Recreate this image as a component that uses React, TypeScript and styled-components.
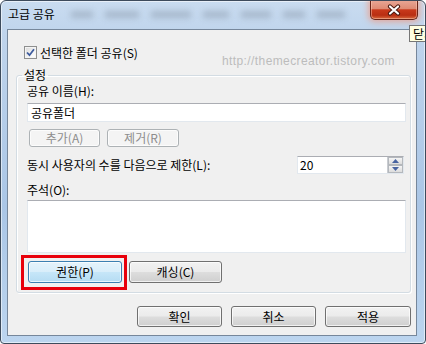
import styled, { createGlobalStyle } from 'styled-components';

const GlobalStyle = createGlobalStyle`
  html, body {
    margin: 0;
    padding: 0;
    background: #ffffff;
  }
  body {
    font-family: 'Noto Sans CJK KR', 'Noto Sans', sans-serif;
    font-size: 12px;
    color: #000;
  }
  * {
    box-sizing: border-box;
  }
`;

const blurWidths = [22, 34, 40, 26, 30, 22, 28];

const App = () => {
    return (
        <>
            <GlobalStyle />
            <Window>
                <TitleBar>
                    <Title>고급 공유</Title>
                    <BlurRow>
                        {blurWidths.map((w, i) => (
                            <BlurBlock key={i} $w={w} />
                        ))}
                    </BlurRow>
                    <CloseButton>
                        <svg width="16" height="12" viewBox="0 0 16 12">
                            <path d="M4 2.5 L12 9.5 M12 2.5 L4 9.5" stroke="#4a1a10" strokeWidth="4.2" strokeLinecap="round" />
                            <path d="M4 2.5 L12 9.5 M12 2.5 L4 9.5" stroke="#ffffff" strokeWidth="2.2" strokeLinecap="round" />
                        </svg>
                    </CloseButton>
                </TitleBar>

                <Client>
                    <Watermark>http://themecreator.tistory.com</Watermark>

                    <CheckRow>
                        <CheckBox>
                            <svg width="9" height="9" viewBox="0 0 9 9">
                                <path d="M1 4.5 L3.5 7.2 L8 1.2" stroke="#3e5c9e" strokeWidth="1.8" fill="none" />
                            </svg>
                        </CheckBox>
                        <span>선택한 폴더 공유(S)</span>
                    </CheckRow>

                    <Group>
                        <Legend>설정</Legend>
                        <Label>공유 이름(H):</Label>
                        <TextInput>공유폴더</TextInput>

                        <ButtonRow $indent={2}>
                            <Button $w={71} $h={18} $variant="disabled">추가(A)</Button>
                            <Button $w={72} $h={18} $variant="disabled">제거(R)</Button>
                        </ButtonRow>

                        <LimitRow>
                            <span>동시 사용자의 수를 다음으로 제한(L):</span>
                            <Spinner>
                                <SpinValue>20</SpinValue>
                                <SpinButtons>
                                    <SpinButton>
                                        <svg width="7" height="4" viewBox="0 0 7 4">
                                            <path d="M0 4 L3.5 0 L7 4 Z" fill="#4863a0" />
                                        </svg>
                                    </SpinButton>
                                    <SpinButton>
                                        <svg width="7" height="4" viewBox="0 0 7 4">
                                            <path d="M0 0 L3.5 4 L7 0 Z" fill="#4863a0" />
                                        </svg>
                                    </SpinButton>
                                </SpinButtons>
                            </Spinner>
                        </LimitRow>

                        <CommentLabel>주석(O):</CommentLabel>
                        <TextArea />

                        <ButtonRow $indent={1} $gap={7} $top={8}>
                            <Button $w={94} $h={22} $variant="focus" $marked>
                                권한(P)
                            </Button>
                            <Button $w={93} $h={22}>캐싱(C)</Button>
                        </ButtonRow>
                    </Group>

                    <Footer>
                        <Button $w={85} $h={21}>확인</Button>
                        <Button $w={85} $h={21}>취소</Button>
                        <Button $w={86} $h={21}>적용</Button>
                    </Footer>
                </Client>

                <Tooltip>닫기</Tooltip>
            </Window>
        </>
    );
};

export default App;

const Window = styled.div`
    position: relative;
    width: 426px;
    height: 344px;
    overflow: hidden;
    display: flex;
    flex-direction: column;
    padding: 0 8px 7px 6px;
    border: 1px solid #3d4b5c;
    border-radius: 6px 6px 4px 4px;
    background: linear-gradient(180deg, #c9dcf0 0%, #bfd4ec 10%, #aac6e6 60%, #bcd5ef 100%);
    box-shadow: inset 0 0 0 1px rgba(255, 255, 255, 0.55);
`;

const TitleBar = styled.div`
    height: 28px;
    display: flex;
    align-items: flex-start;
`;

const Title = styled.div`
    margin: 6px 0 0 1px;
    line-height: 14px;
    font-size: 12px;
    white-space: nowrap;
`;

const BlurRow = styled.div`
    display: flex;
    gap: 12px;
    margin: 10px 0 0 16px;
`;

const BlurBlock = styled.span<{ $w: number }>`
    display: block;
    width: ${(p) => p.$w}px;
    height: 7px;
    background: #8e9db0;
    opacity: 0.55;
    filter: blur(3px);
`;

const CloseButton = styled.div`
    margin: -1px -1px 0 auto;
    width: 48px;
    height: 20px;
    display: flex;
    align-items: center;
    justify-content: center;
    border: 1px solid #6a2418;
    border-top: none;
    border-radius: 0 0 5px 5px;
    background: linear-gradient(180deg, #e9a897 0%, #df8b74 45%, #c8391b 52%, #b92e12 80%, #d86a3e 100%);
    box-shadow: 0 0 6px 2px rgba(255, 130, 90, 0.55), inset 0 0 0 1px rgba(255, 210, 190, 0.45);
`;

const Client = styled.div`
    position: relative;
    flex: 1;
    display: flex;
    flex-direction: column;
    padding: 16px 5px 0 8px;
    border: 1px solid #76879b;
    background: #f0f0f0;
`;

const Watermark = styled.div`
    position: absolute;
    top: 24px;
    left: 214px;
    line-height: 14px;
    font-family: 'Liberation Sans', Arial, sans-serif;
    font-size: 12px;
    letter-spacing: 0.4px;
    color: #bcbcbc;
    white-space: nowrap;
`;

const CheckRow = styled.div`
    display: flex;
    align-items: center;
    gap: 3px;
    height: 13px;
    margin-left: 8px;
    line-height: 13px;
`;

const CheckBox = styled.div`
    width: 13px;
    height: 13px;
    display: flex;
    align-items: center;
    justify-content: center;
    border: 1px solid #8e8f8f;
    background: linear-gradient(135deg, #d8d8d8 0%, #f4f4f4 60%, #ffffff 100%);
    box-shadow: inset 0 0 0 1px #f4f4f4;
`;

const Group = styled.fieldset`
    margin: 10px 0 0 0;
    padding: 3px 4px 9px 10px;
    border: 1px solid #d3dce3;
    border-radius: 3px;
    box-shadow: inset 1px 1px 0 #ffffff, 1px 1px 0 #ffffff;
    display: flex;
    flex-direction: column;
    min-width: 0;
`;

const Legend = styled.legend`
    margin-left: -5px;
    padding: 0 2px;
    line-height: 12px;
    font-size: 12px;
`;

const Label = styled.div`
    line-height: 14px;
`;

const CommentLabel = styled(Label)`
    margin-top: 9px;
`;

const TextInput = styled.div`
    margin-top: 5px;
    height: 19px;
    padding: 0 3px;
    line-height: 17px;
    border: 1px solid #e2e8ee;
    border-top-color: #abadb3;
    background: #ffffff;
`;

const TextArea = styled.div`
    margin-top: 3px;
    height: 53px;
    border: 1px solid #e2e8ee;
    border-top-color: #abadb3;
    background: #ffffff;
`;

const ButtonRow = styled.div<{ $indent: number; $gap?: number; $top?: number }>`
    display: flex;
    gap: ${(p) => p.$gap ?? 7}px;
    margin-top: ${(p) => p.$top ?? 7}px;
    padding-left: ${(p) => p.$indent}px;
`;

type Variant = 'normal' | 'focus' | 'disabled';

const buttonLook: Record<Variant, string> = {
    normal: `
        border-color: #707070;
        color: #000;
        background: linear-gradient(180deg, #f2f2f2 0%, #ebebeb 48%, #dddddd 52%, #cfcfcf 100%);
    `,
    focus: `
        border-color: #3c7fb1;
        color: #000;
        background: linear-gradient(180deg, #e5f3fb 0%, #d9eefa 48%, #c6e6f8 52%, #b5dcf3 100%);
    `,
    disabled: `
        border-color: #adb2b5;
        color: #8d8d8d;
        background: #f4f4f4;
    `,
};

// the red annotation frame drawn over the marked button
const markFrame = `
    &::after {
        content: '';
        position: absolute;
        top: -7px;
        left: -8px;
        right: -6px;
        bottom: -8px;
        border: 3px solid #e8000b;
        pointer-events: none;
    }
`;

const Button = styled.div<{ $w: number; $h: number; $variant?: Variant; $marked?: boolean }>`
    position: relative;
    width: ${(p) => p.$w}px;
    height: ${(p) => p.$h}px;
    display: flex;
    align-items: center;
    justify-content: center;
    border: 1px solid;
    border-radius: 3px;
    box-shadow: inset 0 0 0 1px rgba(255, 255, 255, 0.7);
    font-size: 12px;
    line-height: 14px;
    ${(p) => buttonLook[p.$variant ?? 'normal']}
    ${(p) => (p.$marked ? markFrame : '')}
`;

const LimitRow = styled.div`
    display: flex;
    align-items: center;
    justify-content: space-between;
    margin-top: 9px;
    padding-right: 2px;
    line-height: 14px;
`;

const Spinner = styled.div`
    width: 107px;
    height: 18px;
    display: flex;
    border: 1px solid #e2e8ee;
    border-top-color: #abadb3;
    background: #ffffff;
`;

const SpinValue = styled.div`
    flex: 1;
    padding-left: 2px;
    line-height: 16px;
`;

const SpinButtons = styled.div`
    width: 16px;
    display: flex;
    flex-direction: column;
    border-left: 1px solid #c9ccd1;
`;

const SpinButton = styled.div`
    flex: 1;
    display: flex;
    align-items: center;
    justify-content: center;
    border: 1px solid #b4b8bd;
    background: linear-gradient(180deg, #f5f5f5, #dcdcdc);
`;

const Footer = styled.div`
    display: flex;
    justify-content: flex-end;
    gap: 9px;
    margin-top: 13px;
`;

const Tooltip = styled.div`
    position: absolute;
    top: 24px;
    left: 408px;
    height: 17px;
    padding: 0 3px;
    line-height: 15px;
    border: 1px solid #767676;
    background: #ffffe1;
    font-size: 12px;
    white-space: nowrap;
`;
